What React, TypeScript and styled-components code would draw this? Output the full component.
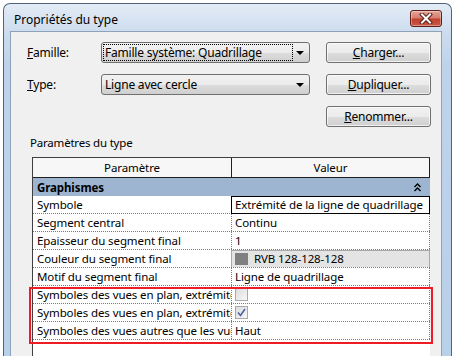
import styled, { createGlobalStyle } from "styled-components";

const GlobalStyle = createGlobalStyle`
  html, body {
    margin: 0;
    padding: 0;
    background: #ffffff;
    overflow: hidden;
  }
  body {
    font-family: "Segoe UI", "Noto Sans", sans-serif;
    font-size: 12px;
    letter-spacing: -0.2px;
    color: #000;
  }
`;

const Window = styled.div`
  position: relative;
  margin: 3px 2px 0 3px;
  height: 360px;
  border: 1px solid #51647c;
  border-bottom: none;
  border-radius: 7px 7px 0 0;
  background: linear-gradient(to bottom, #e3ecf6 0px, #cddcee 28px, #bed3ea 60px, #b9d0e9 100%);
  padding: 0 9px 0 6px;
  display: flex;
  flex-direction: column;
  box-sizing: border-box;
`;

const TitleBar = styled.div`
  height: 27px;
  display: flex;
  justify-content: space-between;
  align-items: flex-start;
`;

const Title = styled.span`
  margin: 8px 0 0 4px;
  font-size: 12px;
  letter-spacing: 0;
  line-height: 16px;
`;

const CloseButton = styled.div`
  margin-top: 6px;
  width: 30px;
  height: 15px;
  border: 1px solid #5e1f18;
  border-radius: 3px;
  background: linear-gradient(to bottom, #e4a598 0%, #d47f70 45%, #c2402c 55%, #c9594a 100%);
  box-shadow: inset 0 0 0 1px rgba(255, 255, 255, 0.35);
  display: flex;
  align-items: center;
  justify-content: center;
`;

const Client = styled.div`
  flex: 1;
  background: #f0f0f0;
  border: 1px solid #8ea3bb;
  border-bottom: none;
  padding: 10px 0 0 16px;
  display: flex;
  flex-direction: column;
`;

const FormGrid = styled.div`
  display: grid;
  grid-template-columns: 58px 209px 105px;
  grid-auto-rows: 21px;
  column-gap: 16px;
  row-gap: 11px;
  align-items: center;
`;

const Label = styled.span`
  line-height: 16px;
  u {
    text-decoration: underline;
  }
`;

const Combo = styled.div`
  position: relative;
  height: 21px;
  box-sizing: border-box;
  border: 1px solid #707070;
  border-radius: 3px;
  background: linear-gradient(to bottom, #f2f2f2 0%, #ebebeb 50%, #dddddd 51%, #cfcfcf 100%);
  display: flex;
  align-items: center;
  padding: 0 0 0 1px;
`;

const ComboText = styled.span<{ $focused?: boolean }>`
  flex: 1;
  height: 15px;
  line-height: 15px;
  margin-right: 16px;
  padding-left: 1px;
  border: 1px dotted ${(p) => (p.$focused ? "#000" : "transparent")};
  white-space: nowrap;
  overflow: hidden;
`;

const Arrow = styled.span`
  position: absolute;
  right: 5px;
  top: 8px;
  width: 0;
  height: 0;
  border-left: 4px solid transparent;
  border-right: 4px solid transparent;
  border-top: 4px solid #000;
`;

const Button = styled.div`
  height: 21px;
  box-sizing: border-box;
  border: 1px solid #707070;
  border-radius: 3px;
  background: linear-gradient(to bottom, #f2f2f2 0%, #ebebeb 50%, #dddddd 51%, #cfcfcf 100%);
  box-shadow: inset 0 0 0 1px rgba(255, 255, 255, 0.7);
  display: flex;
  align-items: center;
  justify-content: center;
  line-height: 16px;
`;

const SectionLabel = styled.div`
  margin: 8px 0 0 3px;
  line-height: 16px;
  font-size: 11.5px;
`;

const TableWrap = styled.div`
  position: relative;
  margin: 6px 0 0 5px;
  width: 398px;
  flex: 1;
  background: #ffffff;
  border-left: 1px solid #404040;
  box-sizing: border-box;
  display: flex;
  flex-direction: column;
  font-size: 11.5px;
  letter-spacing: -0.1px;
`;

const HeaderRow = styled.div`
  display: grid;
  grid-template-columns: 198px 199px;
  height: 21px;
  box-sizing: border-box;
  border-top: 1px solid #404040;
  border-bottom: 1px solid #202020;
  background: #f7f7f7;
`;

const HeadCell = styled.div<{ $last?: boolean }>`
  display: flex;
  align-items: center;
  justify-content: center;
  border-left: ${(p) => (p.$last ? "1px solid #202020" : "none")};
  border-right: ${(p) => (p.$last ? "1px solid #202020" : "none")};
`;

const GroupRow = styled.div`
  height: 18px;
  background: #9db5d1;
  display: flex;
  align-items: center;
  justify-content: space-between;
  padding: 0 9px 0 4px;
  font-weight: bold;
`;

const Row = styled.div`
  display: grid;
  grid-template-columns: 198px 199px;
  height: 18px;
  box-sizing: border-box;
  border-bottom: 1px dotted #7a7a7a;
`;

const NameCell = styled.div`
  padding-left: 4px;
  line-height: 17px;
  white-space: nowrap;
  overflow: hidden;
`;

const ValueCell = styled.div<{ $selected?: boolean; $shaded?: boolean }>`
  box-sizing: border-box;
  border-left: 1px dotted #7a7a7a;
  border-right: 1px dotted #7a7a7a;
  padding-left: 3px;
  line-height: 16px;
  white-space: nowrap;
  overflow: hidden;
  display: flex;
  align-items: center;
  ${(p) => p.$selected && `border: 1px solid #000; margin-bottom: -1px; position: relative;`}
  ${(p) => p.$shaded && `background: #e4e4e4; border: 1px solid #a9a9a9; border-bottom: none;`}
`;

const Swatch = styled.span`
  width: 13px;
  height: 12px;
  background: #808080;
  margin-right: 6px;
`;

const Checkbox = styled.span`
  width: 11px;
  height: 11px;
  border: 1px solid #a8a8a8;
  background: linear-gradient(135deg, #dcdcdc, #f7f7f7);
  display: flex;
  align-items: center;
  justify-content: center;
`;

const Highlight = styled.div`
  position: absolute;
  left: -4px;
  top: 130px;
  width: 404px;
  height: 57px;
  border: 2px solid #ee1c24;
  box-sizing: border-box;
  pointer-events: none;
`;

const rows: { name: string; value: React.ReactNode; selected?: boolean; shaded?: boolean }[] = [
  { name: "Symbole", value: "Extrémité de la ligne de quadrillage", selected: true },
  { name: "Segment central", value: "Continu" },
  { name: "Epaisseur du segment final", value: "1" },
  {
    name: "Couleur du segment final",
    value: (
      <>
        <Swatch />
        RVB 128-128-128
      </>
    ),
    shaded: true,
  },
  { name: "Motif du segment final", value: "Ligne de quadrillage" },
  {
    name: "Symboles des vues en plan, extrémité 1 (par défaut)",
    value: <Checkbox />,
  },
  {
    name: "Symboles des vues en plan, extrémité 2 (par défaut)",
    value: (
      <Checkbox>
        <svg width="9" height="9" viewBox="0 0 9 9">
          <path d="M1 4.5 L3.5 7.5 L8 1" fill="none" stroke="#4d62a0" strokeWidth="1.6" />
        </svg>
      </Checkbox>
    ),
  },
  { name: "Symboles des vues autres que les vues en plan", value: "Haut" },
];

export default function App() {
  return (
    <>
      <GlobalStyle />
      <Window>
        <TitleBar>
          <Title>Propriétés du type</Title>
          <CloseButton>
            <svg width="14" height="11" viewBox="0 0 14 11">
              <path
                d="M3 1.5 L11 9.5 M11 1.5 L3 9.5"
                stroke="#5a1e16"
                strokeWidth="4"
                strokeLinecap="square"
              />
              <path
                d="M3 1.5 L11 9.5 M11 1.5 L3 9.5"
                stroke="#ffffff"
                strokeWidth="2"
                strokeLinecap="square"
              />
            </svg>
          </CloseButton>
        </TitleBar>
        <Client>
          <FormGrid>
            <Label>
              <u>F</u>amille:
            </Label>
            <Combo>
              <ComboText $focused>Famille système: Quadrillage</ComboText>
              <Arrow />
            </Combo>
            <Button>
              <span>
                <u>C</u>harger...
              </span>
            </Button>
            <Label>
              <u>T</u>ype:
            </Label>
            <Combo>
              <ComboText>Ligne avec cercle</ComboText>
              <Arrow />
            </Combo>
            <Button>
              <span>
                <u>D</u>upliquer...
              </span>
            </Button>
            <span />
            <span />
            <Button>
              <span>
                <u>R</u>enommer...
              </span>
            </Button>
          </FormGrid>
          <SectionLabel>Paramètres du type</SectionLabel>
          <TableWrap>
            <HeaderRow>
              <HeadCell>Paramètre</HeadCell>
              <HeadCell $last>Valeur</HeadCell>
            </HeaderRow>
            <GroupRow>
              <span>Graphismes</span>
              <svg width="7" height="9" viewBox="0 0 7 9">
                <path d="M0.5 4 L3.5 1 L6.5 4 M0.5 8 L3.5 5 L6.5 8" fill="none" stroke="#000" strokeWidth="1.4" />
              </svg>
            </GroupRow>
            {rows.map((r) => (
              <Row key={r.name}>
                <NameCell>{r.name}</NameCell>
                <ValueCell $selected={r.selected} $shaded={r.shaded}>
                  {r.value}
                </ValueCell>
              </Row>
            ))}
            <Highlight />
          </TableWrap>
        </Client>
      </Window>
    </>
  );
}
